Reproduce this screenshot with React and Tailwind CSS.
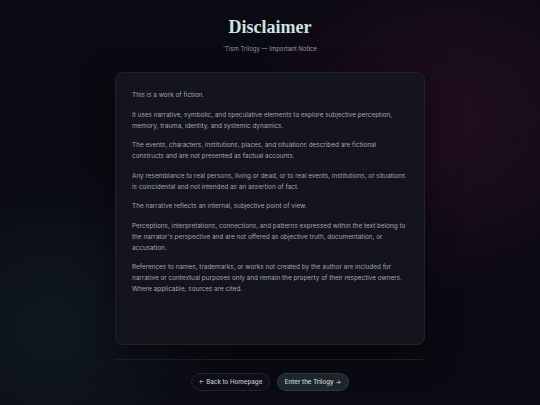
import React from "react";

const paragraphs = [
  "This is a work of fiction.",
  "It uses narrative, symbolic, and speculative elements to explore subjective perception, memory, trauma, identity, and systemic dynamics.",
  "The events, characters, institutions, places, and situations described are fictional constructs and are not presented as factual accounts.",
  "Any resemblance to real persons, living or dead, or to real events, institutions, or situations is coincidental and not intended as an assertion of fact.",
  "The narrative reflects an internal, subjective point of view.",
  "Perceptions, interpretations, connections, and patterns expressed within the text belong to the narrator's perspective and are not offered as objective truth, documentation, or accusation.",
  "References to names, trademarks, or works not created by the author are included for narrative or contextual purposes only and remain the property of their respective owners. Where applicable, sources are cited.",
];

const DisclaimerPage = () => {
  return (
    <div className="relative w-[540px] h-[405px] overflow-hidden bg-[#0a0a12] [font-family:Inter,'Liberation_Sans',sans-serif]">
      {/* background glows */}
      <div className="absolute w-[420px] h-[360px] -right-[120px] -top-[60px] rounded-full bg-[radial-gradient(closest-side,rgba(70,20,45,0.4),rgba(70,20,45,0)_100%)]" />
      <div className="absolute w-[380px] h-[340px] -left-[140px] top-[160px] rounded-full bg-[radial-gradient(closest-side,rgba(25,45,55,0.4),rgba(25,45,55,0)_100%)]" />

      <div className="relative flex flex-col items-center">
        <h1 className="mt-[14px] text-[18px] leading-[26px] font-bold text-[#cfe2e2] [font-family:'Liberation_Serif','Times_New_Roman',serif]">
          Disclaimer
        </h1>
        <p className="mt-[4px] text-[6px] leading-[9px] text-[#9a9aae]">
          'Tism Trilogy — Important Notice
        </p>

        <div className="mt-[19px] w-[310px] h-[273px] rounded-[8px] border border-[#22222c] bg-[#15151e]/90 shadow-[0_10px_30px_rgba(0,0,0,0.5)] px-[16px] pt-[17px]">
          {paragraphs.map((p, i) => (
            <p
              key={i}
              className="text-[6.4px] leading-[11px] text-[#a3a2b4] mb-[8.5px]"
            >
              {p}
            </p>
          ))}
        </div>

        <div className="mt-[14px] w-[310px] h-px bg-[#1b1c25]" />

        <div className="mt-[13px] flex gap-[7px]">
          <button className="h-[18px] w-[79px] rounded-full border border-[#23242e] bg-[#0d0e16] text-[6.2px] font-medium text-[#c4c6d0] flex items-center justify-center">
            ← Back to Homepage
          </button>
          <button className="h-[18px] w-[72px] rounded-full border border-[#2c3b40] bg-[#1b272c] text-[6.2px] font-medium text-[#cfd6d8] flex items-center justify-center">
            Enter the Trilogy →
          </button>
        </div>
      </div>
    </div>
  );
};

export default DisclaimerPage;
